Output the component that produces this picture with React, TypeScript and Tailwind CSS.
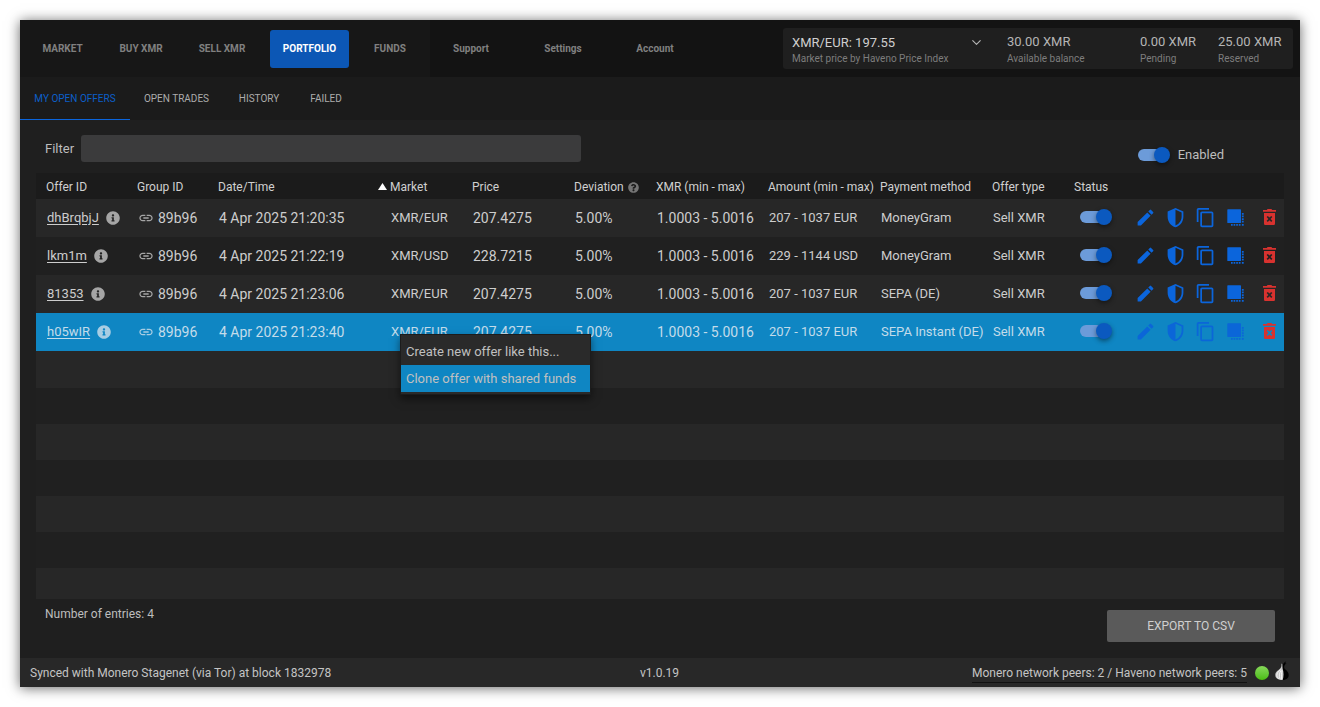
import React, { useState } from "react";
import { MdContentCopy, MdEdit, MdLink } from "react-icons/md";
import { FaInfoCircle, FaQuestionCircle } from "react-icons/fa";
import { ChevronDown } from "lucide-react";

type Offer = {
  id: string;
  group: string;
  date: string;
  market: string;
  price: string;
  deviation: string;
  xmr: string;
  amount: string;
  payment: string;
  type: string;
  selected?: boolean;
};

const offers: Offer[] = [
  { id: "dhBrqbjJ", group: "89b96", date: "4 Apr 2025 21:20:35", market: "XMR/EUR", price: "207.4275", deviation: "5.00%", xmr: "1.0003 - 5.0016", amount: "207 - 1037 EUR", payment: "MoneyGram", type: "Sell XMR" },
  { id: "lkm1m", group: "89b96", date: "4 Apr 2025 21:22:19", market: "XMR/USD", price: "228.7215", deviation: "5.00%", xmr: "1.0003 - 5.0016", amount: "229 - 1144 USD", payment: "MoneyGram", type: "Sell XMR" },
  { id: "81353", group: "89b96", date: "4 Apr 2025 21:23:06", market: "XMR/EUR", price: "207.4275", deviation: "5.00%", xmr: "1.0003 - 5.0016", amount: "207 - 1037 EUR", payment: "SEPA (DE)", type: "Sell XMR" },
  { id: "h05wIR", group: "89b96", date: "4 Apr 2025 21:23:40", market: "XMR/EUR", price: "207.4275", deviation: "5.00%", xmr: "1.0003 - 5.0016", amount: "207 - 1037 EUR", payment: "SEPA Instant (DE)", type: "Sell XMR", selected: true },
];

const mainNav = [
  { label: "MARKET", width: "w-[63px]" },
  { label: "BUY XMR", width: "w-[66px]" },
  { label: "SELL XMR", width: "w-[68px]" },
  { label: "PORTFOLIO", width: "w-[79px]", active: true },
  { label: "FUNDS", width: "w-[54px]" },
];

const tabs = [
  { label: "MY OPEN OFFERS", width: "w-[110px]", active: true },
  { label: "OPEN TRADES", width: "w-[93px]" },
  { label: "HISTORY", width: "w-[72px]" },
  { label: "FAILED", width: "w-[62px]" },
];

const columnWidths = [
  "w-[91px]", "w-[81px]", "w-[172px]", "w-[82px]", "w-[102px]", "w-[82px]", "w-[112px]", "w-[112px]",
  "w-[112px]", "w-[82px]", "w-[66px]", "w-[30px]", "w-[30px]", "w-[30px]", "w-[30px]", "w-[34px]",
];

function Toggle({ id, label }: { id?: string; label?: string }) {
  const [on, setOn] = useState(true);
  return (
    <input
      id={id}
      type="checkbox"
      role="switch"
      aria-label={label}
      checked={on}
      onChange={() => setOn(!on)}
      className="relative block h-3 w-8 appearance-none before:absolute before:inset-y-0 before:left-0 before:w-7 before:rounded-full before:bg-[#6c9bd9] after:absolute after:-top-0.5 after:left-0 after:size-4 after:rounded-full after:bg-[#8a8a8a] after:shadow-[0_2px_5px_rgba(0,0,0,0.45)] checked:after:left-4 checked:after:bg-[#0b59bf]"
    />
  );
}

function ShieldIcon() {
  return (
    <svg viewBox="0 0 24 24" className="size-[21px]" fill="currentColor" aria-hidden="true">
      <path d="M21 11c0 5.55-3.84 10.74-9 12-5.16-1.26-9-6.45-9-12V5l9-4 9 4v6m-9 10c3.75-1 7-5.46 7-9.78V6.3l-7-3.12V21z" />
    </svg>
  );
}

function CloneIcon() {
  return (
    <svg viewBox="0 0 17 17" className="size-[17px]" fill="currentColor" aria-hidden="true">
      <rect x="0.3" y="0.3" width="13.7" height="13.7" rx="0.6" />
      <path d="M14.9 4h1.8v1.7h-1.8zM14.9 6.6h1.8v1.7h-1.8zM14.9 9.2h1.8v1.7h-1.8zM14.9 11.8h1.8v1.7h-1.8zM14.9 14.9h1.8v1.8h-1.8zM4 14.9h1.7v1.8H4zM6.6 14.9h1.7v1.8H6.6zM9.2 14.9h1.7v1.8H9.2zM11.8 14.9h1.7v1.8h-1.7z" />
    </svg>
  );
}

function TrashIcon() {
  return (
    <svg viewBox="0 0 13 16" className="h-4 w-[13px]" fill="currentColor" aria-hidden="true">
      <path
        fillRule="evenodd"
        d="M0 1h3.8L4.600 0h3.800l.8 1H13v1.700H0zM1 4h11v10.400c0 .9-.7 1.600-1.600 1.600H2.600C1.700 16 1 15.300 1 14.400zM3.600 8.100l1.800 1.800-1.800 1.800 1.200 1.200 1.700-1.700 1.700 1.700 1.200-1.200-1.800-1.800 1.800-1.800-1.200-1.200-1.700 1.700-1.700-1.700z"
      />
    </svg>
  );
}

function TorIcon() {
  return (
    <svg viewBox="0 0 14 20" className="h-5 w-3.5" aria-hidden="true">
      <path d="M6.800 6.500C7.200 3.800 8.400 2 11.200 0.300L10 2.600 11.600 2C9.800 3.500 8.900 5 9.200 6.800C9.600 8.800 13.700 10 13.700 13.900C13.700 17.200 11.200 19 7 19Z" fill="#000" />
      <path d="M7.300 3.200L6.400 2.600C6.600 4.800 6.500 6 5.400 7.300C3.500 9.400 0.300 10.600 0.300 14C0.300 17.200 3.200 19 7.600 19C8.800 16 8.900 11.400 7.600 7.500Z" fill="#c9c9c9" />
      <path d="M5.600 8.600C3 10.800 1.700 12.300 1.900 14.600C2 16 2.800 17 3.800 17.700M6.300 9.200C4.400 11.500 3.700 14.400 5 17.900M7 9.600C6.400 12 6.300 15 6.700 18.300" fill="none" stroke="#fff" strokeWidth="0.8" />
    </svg>
  );
}

function IconButton({ label, children }: { label: string; children: React.ReactNode }) {
  return (
    <button type="button" aria-label={label} className="flex h-6 w-full items-center justify-center">
      {children}
    </button>
  );
}

function ContextMenu() {
  return (
    <div role="menu" className="absolute top-[21px] left-5 z-10 flex w-[191px] flex-col border border-[#1c1c1c] bg-[#2a2a2a] pt-[3px] pb-0.5 text-[13px] leading-7 text-[#c0c0c0] shadow-[0_4px_8px_rgba(0,0,0,0.5)]">
      <button type="button" role="menuitem" className="h-[27px] px-[5px] text-left">Create new offer like this...</button>
      <button type="button" role="menuitem" className="h-[27px] bg-[#0f86c3] px-[5px] text-left">Clone offer with shared funds</button>
    </div>
  );
}

function OfferRow({ offer, odd }: { offer: Offer; odd: boolean }) {
  const bg = offer.selected ? "bg-[#0f86c3]" : odd ? "bg-[#202020]" : "bg-[#272727]";
  const text = offer.selected ? "text-[#c3dcea]" : "text-[#cdcdcd]";
  const muted = offer.selected ? "text-[#a8cde3]" : "text-[#a5a5a5]";
  const action = offer.selected ? "pb-0.5 text-[#0b66d8]" : "pb-0.5 text-[#0b65dc]";
  return (
    <tr className={`h-[38px] text-sm ${text} ${bg}`}>
      <td className="pl-[11px]">
        <div className="flex items-center gap-[7px] text-[13px]">
          <a href="#offer" className="underline underline-offset-2">{offer.id}</a>
          <FaInfoCircle className={`size-3.5 ${muted}`} />
        </div>
      </td>
      <td className="pl-[11px]">
        <div className="flex items-center gap-1">
          <MdLink className={`size-4 ${muted}`} />
          {offer.group}
        </div>
      </td>
      <td className="pl-[11px]">{offer.date}</td>
      <td className="relative pl-[11px] text-[13px]">
        {offer.market}
        {offer.selected && <ContextMenu />}
      </td>
      <td className="pl-[11px]">{offer.price}</td>
      <td className="pl-[11px]">{offer.deviation}</td>
      <td className="pl-[11px]">{offer.xmr}</td>
      <td className="pl-[11px] text-[13px]">{offer.amount}</td>
      <td className="pl-[11px] text-[13px]">{offer.payment}</td>
      <td className="pl-[11px] text-[13px]">{offer.type}</td>
      <td className="pb-0.5 pl-4"><Toggle label={`Offer ${offer.id} enabled`} /></td>
      <td className={action}><IconButton label="Edit offer"><MdEdit className="size-[21px]" /></IconButton></td>
      <td className={action}><IconButton label="Offer trigger price"><ShieldIcon /></IconButton></td>
      <td className={action}><IconButton label="Duplicate offer"><MdContentCopy className="size-[21px]" /></IconButton></td>
      <td className={action}><IconButton label="Clone offer"><CloneIcon /></IconButton></td>
      <td className="pb-0.5 pl-1 text-[#d8322f]"><IconButton label="Remove offer"><TrashIcon /></IconButton></td>
    </tr>
  );
}

function Balance({ value, label, className }: { value: string; label: string; className: string }) {
  return (
    <div className={className}>
      <div className="text-[13px] leading-5 text-[#b5b5b5]">{value}</div>
      <div className="text-[10px] leading-3.5 text-[#7d7d7d]">{label}</div>
    </div>
  );
}

export default function App() {
  return (
    <div className="flex min-h-screen bg-white p-5 font-[Roboto,sans-serif] whitespace-nowrap">
      <div className="flex flex-1 flex-col bg-[#1f1f1f] shadow-[0_1px_12px_rgba(0,0,0,0.6)]">
        <header className="flex h-[57px] bg-[#131313]">
          <nav className="flex items-center gap-[14px] bg-[#171717] pr-[13px] pl-[11px] text-[10px] font-bold">
            {mainNav.map((item) => (
              <button
                key={item.label}
                type="button"
                className={`h-[38px] rounded-[3px] ${item.width} ${item.active ? "bg-[#0c57b5] text-white" : "text-[#808080]"}`}
              >
                {item.label}
              </button>
            ))}
          </nav>
          <nav className="flex items-center gap-2.5 text-[10px] font-bold text-[#808080]">
            <button type="button" className="h-[38px] w-[82px]">Support</button>
            <button type="button" className="h-[38px] w-[82px]">Settings</button>
            <button type="button" className="h-[38px] w-[82px]">Account</button>
          </nav>
          <div className="mt-2 mr-[7px] ml-auto flex h-[41px] rounded-[3px] bg-[#1f1f1f] pl-[9px]">
            <button type="button" className="flex w-48 gap-2 pt-[5px] text-left">
              <span className="flex-1">
                <span className="block text-[13px] leading-5 text-[#cfcfcf]">XMR/EUR: 197.55</span>
                <span className="block text-[10px] leading-3 text-[#7d7d7d]">Market price by Haveno Price Index</span>
              </span>
              <ChevronDown className="mt-0.5 size-[15px] text-[#b5b5b5]" strokeWidth={1.8} />
            </button>
            <div className="flex pt-1 pl-[23px]">
              <Balance value="30.00 XMR" label="Available balance" className="w-[133px]" />
              <Balance value="0.00 XMR" label="Pending" className="w-[78px]" />
              <Balance value="25.00 XMR" label="Reserved" className="w-[75px]" />
            </div>
          </div>
        </header>

        <nav className="flex h-[43px] bg-[#1b1b1b] text-[10px]">
          {tabs.map((tab) => (
            <button
              key={tab.label}
              type="button"
              className={`border-b ${tab.width} ${tab.active ? "border-[#0b65dc] text-[#0c5fc9]" : "border-transparent text-[#acacac]"}`}
            >
              {tab.label}
            </button>
          ))}
        </nav>

        <main className="flex flex-1 flex-col px-4">
          <div className="flex h-[53px] items-start pt-[15px] pr-[60px] pl-[9px] text-[13px] text-[#bdbdbd]">
            <label htmlFor="filter" className="w-9 leading-7">Filter</label>
            <input id="filter" type="text" className="h-[27px] w-[500px] rounded-[3px] bg-[#3b3b3c] px-2 outline-none" />
            <div className="mt-2.5 ml-auto flex items-center gap-2">
              <Toggle id="enabled" />
              <label htmlFor="enabled" className="leading-5">Enabled</label>
            </div>
          </div>

          <table className="w-full table-fixed border-collapse">
            <colgroup>
              {columnWidths.map((width, i) => (
                <col key={i} className={width} />
              ))}
            </colgroup>
            <thead>
              <tr className="h-[26px] bg-[#1b1b1b] text-left text-xs text-[#d0d0d0] [&>th]:pt-0.5 [&>th]:pl-2.5 [&>th]:font-normal">
                <th>Offer ID</th>
                <th>Group ID</th>
                <th>Date/Time</th>
                <th className="relative">
                  <svg viewBox="0 0 9 7" className="absolute top-2.5 -left-0.5 h-[7px] w-[9px]" aria-hidden="true">
                    <path d="M4.500 0L9 7H0z" fill="#fff" />
                  </svg>
                  Market
                </th>
                <th>Price</th>
                <th>
                  <span className="flex items-center justify-between pr-[7px]">
                    Deviation
                    <FaQuestionCircle className="size-[11px] text-[#757575]" />
                  </span>
                </th>
                <th>XMR (min - max)</th>
                <th>Amount (min - max)</th>
                <th>Payment method</th>
                <th>Offer type</th>
                <th>Status</th>
                <th colSpan={5} aria-label="Actions" />
              </tr>
            </thead>
            <tbody>
              {offers.map((offer, i) => (
                <OfferRow key={offer.id} offer={offer} odd={i % 2 === 1} />
              ))}
            </tbody>
          </table>
          <div className="min-h-0 grow basis-0 overflow-hidden">
            {Array.from({ length: 30 }, (_, i) => (
              <div key={i} className="h-9 first:h-[37px] odd:bg-[#272727] even:bg-[#202020]" />
            ))}
          </div>

          <div className="flex h-[59px] items-start justify-between px-[9px]">
            <span className="pt-[7px] text-xs leading-4 text-[#bdbdbd]">Number of entries: 4</span>
            <button type="button" className="mt-[11px] h-8 w-[168px] rounded-xs bg-[#5a5a5a] text-xs text-[#cfcfcf]">EXPORT TO CSV</button>
          </div>
        </main>

        <footer className="grid h-[29px] grid-cols-[1fr_auto_1fr] items-center bg-[#282828] pr-[11px] pl-2.5 text-xs text-[#c4c4c4]">
          <span>Synced with Monero Stagenet (via Tor) at block 1832978</span>
          <span>v1.0.19</span>
          <div className="flex items-center justify-end">
            <span className="border-b border-[#111] pt-0.5 leading-[18px]">Monero network peers: 2 / Haveno network peers: 5</span>
            <span className="ml-2 size-3.5 rounded-full bg-linear-to-b from-[#86d858] to-[#49bd08]" />
            <span className="-mt-1 ml-1.5">
              <TorIcon />
            </span>
          </div>
        </footer>
      </div>
    </div>
  );
}
